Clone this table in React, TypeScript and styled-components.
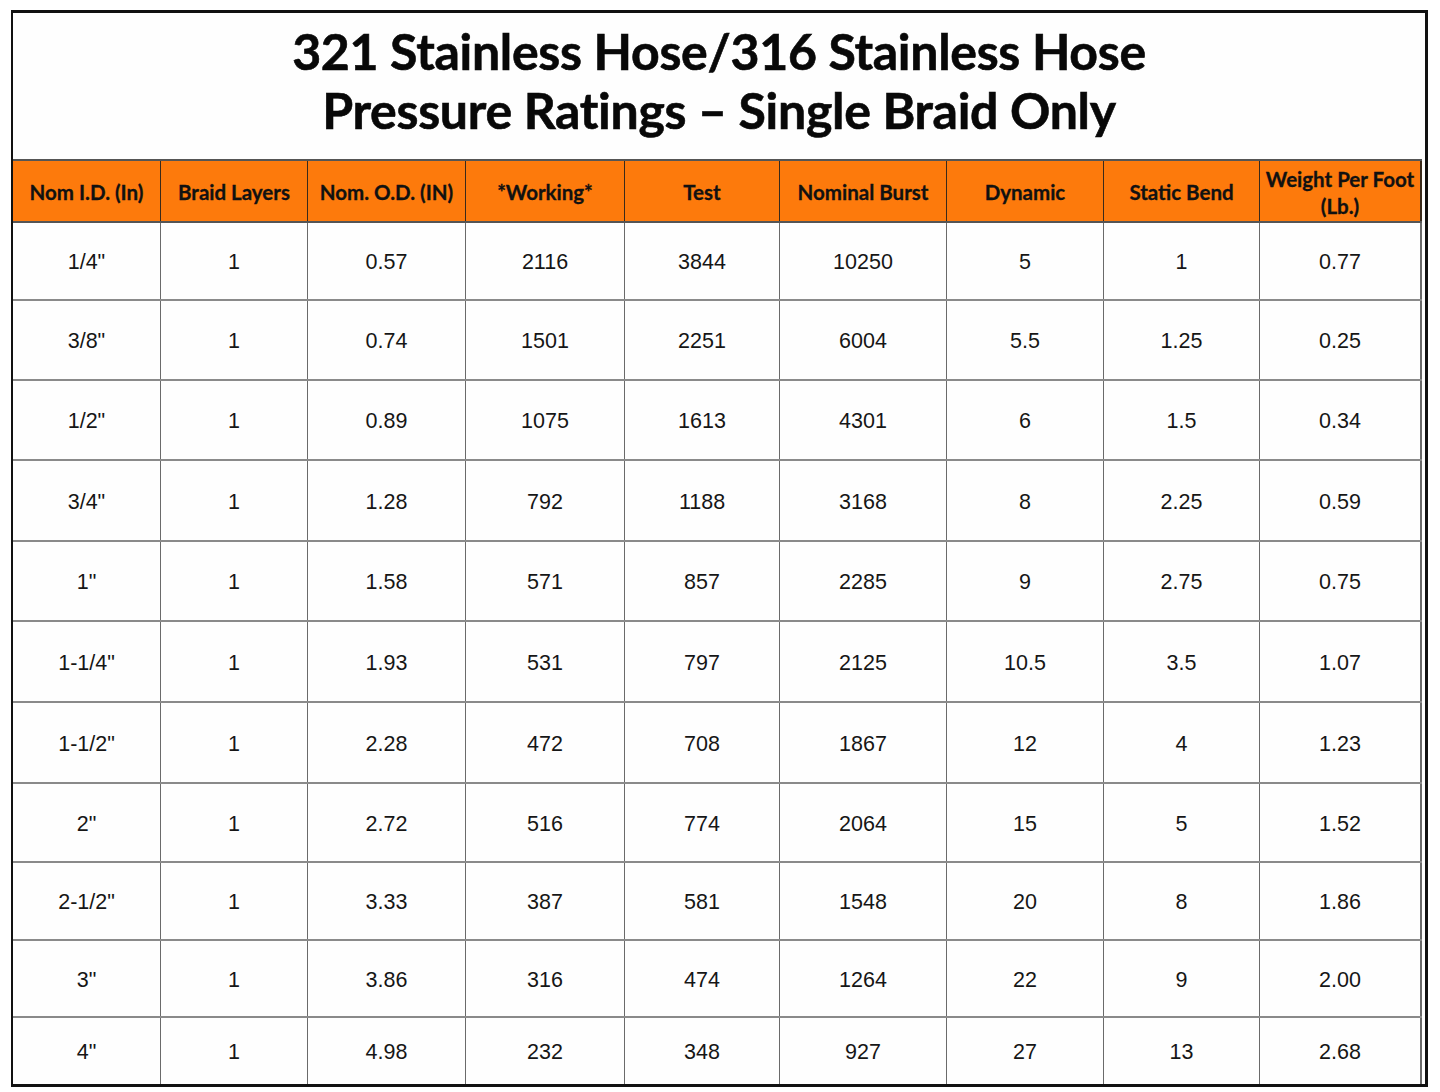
import React from "react";
import styled, { createGlobalStyle } from "styled-components";

const GlobalStyle = createGlobalStyle`
  html, body {
    margin: 0;
    padding: 0;
    background: #ffffff;
  }
  body {
    font-family: "Liberation Sans", Arial, sans-serif;
  }
`;

const columns = [148, 147, 158, 159, 155, 167, 157, 156, 162];

const headings: React.ReactNode[] = [
  "Nom I.D. (In)",
  "Braid Layers",
  "Nom. O.D. (IN)",
  "*Working*",
  "Test",
  "Nominal Burst",
  "Dynamic",
  "Static Bend",
  <>
    Weight Per Foot
    <br />
    (Lb.)
  </>,
];

const rows: { h: number; cells: string[] }[] = [
  { h: 78, cells: ['1/4"', "1", "0.57", "2116", "3844", "10250", "5", "1", "0.77"] },
  { h: 80, cells: ['3/8"', "1", "0.74", "1501", "2251", "6004", "5.5", "1.25", "0.25"] },
  { h: 80, cells: ['1/2"', "1", "0.89", "1075", "1613", "4301", "6", "1.5", "0.34"] },
  { h: 81, cells: ['3/4"', "1", "1.28", "792", "1188", "3168", "8", "2.25", "0.59"] },
  { h: 80, cells: ['1"', "1", "1.58", "571", "857", "2285", "9", "2.75", "0.75"] },
  { h: 81, cells: ['1-1/4"', "1", "1.93", "531", "797", "2125", "10.5", "3.5", "1.07"] },
  { h: 81, cells: ['1-1/2"', "1", "2.28", "472", "708", "1867", "12", "4", "1.23"] },
  { h: 79, cells: ['2"', "1", "2.72", "516", "774", "2064", "15", "5", "1.52"] },
  { h: 78, cells: ['2-1/2"', "1", "3.33", "387", "581", "1548", "20", "8", "1.86"] },
  { h: 77, cells: ['3"', "1", "3.86", "316", "474", "1264", "22", "9", "2.00"] },
  { h: 66, cells: ['4"', "1", "4.98", "232", "348", "927", "27", "13", "2.68"] },
];

const App: React.FC = () => {
  return (
    <>
      <GlobalStyle />
      <Page>
        <Frame>
          <Title>
            321 Stainless Hose/316 Stainless Hose
            <br />
            Pressure Ratings – Single Braid Only
          </Title>
          <Table>
            <HeadRow>
              {headings.map((text, i) => (
                <HeadCell key={i}>{text}</HeadCell>
              ))}
            </HeadRow>
            {rows.map((row, r) => (
              <BodyRow key={r} $h={row.h} $last={r === rows.length - 1}>
                {row.cells.map((text, i) => (
                  <Cell key={i}>{text}</Cell>
                ))}
              </BodyRow>
            ))}
          </Table>
        </Frame>
      </Page>
    </>
  );
};

export default App;

const Page = styled.div`
  width: 1440px;
  height: 1092px;
  padding: 10px 0 0 11px;
  box-sizing: border-box;
  background: #ffffff;
`;

const Frame = styled.div`
  width: 1417px;
  height: 1077px;
  box-sizing: border-box;
  border: 3px solid #111111;
  border-left-width: 2px;
  display: flex;
  flex-direction: column;
  overflow: hidden;
  background: #fefefe;
`;

const Title = styled.h1`
  margin: 0;
  height: 148px;
  box-sizing: border-box;
  padding-top: 9px;
  text-align: center;
  font-family: Lato, "Open Sans", sans-serif;
  font-weight: 700;
  font-size: 50px;
  line-height: 59px;
  color: #080808;
  letter-spacing: -0.3px;
  -webkit-text-stroke: 0.6px #080808;
`;

const Table = styled.div`
  display: flex;
  flex-direction: column;
  width: ${columns.reduce((a, b) => a + b, 0)}px;
`;

const gridCols = columns.map((w) => `${w}px`).join(" ");

const HeadRow = styled.div`
  display: grid;
  grid-template-columns: ${gridCols};
  height: 64px;
  background: #fd7a0c;
  border-top: 2px solid #555555;
  border-bottom: 2px solid #555555;
  box-sizing: border-box;
`;

const HeadCell = styled.div`
  display: flex;
  align-items: center;
  justify-content: center;
  text-align: center;
  border-right: 1px solid #3a2a1a;
  font-family: Lato, "Open Sans", sans-serif;
  font-weight: 700;
  font-size: 20.5px;
  line-height: 27px;
  color: #111111;
  -webkit-text-stroke: 0.3px #111111;
  padding-top: 3px;
  box-sizing: border-box;

  &:last-child {
    border-right-width: 2px;
  }
`;

const BodyRow = styled.div<{ $h: number; $last?: boolean }>`
  display: grid;
  grid-template-columns: ${gridCols};
  height: ${(p) => p.$h}px;
  box-sizing: border-box;
  border-bottom: ${(p) => (p.$last ? "none" : "2px solid #8a8a8a")};
`;

const Cell = styled.div`
  display: flex;
  align-items: center;
  justify-content: center;
  border-right: 1px solid #6a6a6a;
  font-family: "Liberation Sans", Arial, sans-serif;
  font-size: 21.5px;
  color: #161616;
  padding-top: 3px;

  &:last-child {
    border-right-width: 2px;
  }
`;
